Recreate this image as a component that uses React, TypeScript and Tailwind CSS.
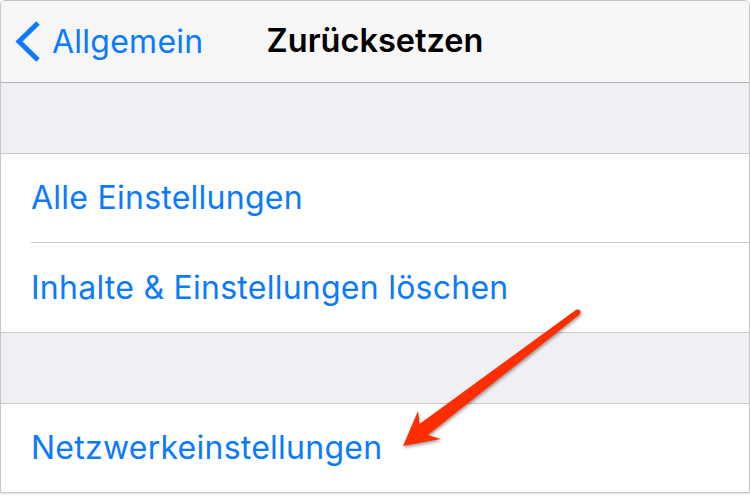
import React from 'react'

const font = { fontFamily: 'Inter, "Liberation Sans", sans-serif' }

function Row({ label, inset }: { label: string; inset?: boolean }) {
  return (
    <div className="relative bg-white h-[88px] flex items-center pl-[30px]">
      <span className="text-[32px] text-[#0a7aff] tracking-[0.25px]">{label}</span>
      {inset && <div className="absolute left-[30px] right-0 bottom-[-1px] h-px bg-[#c8c7cc]" />}
    </div>
  )
}

function Arrow() {
  return (
    <svg className="absolute left-0 top-0 pointer-events-none" width="750" height="496" style={{ filter: 'drop-shadow(1px 2px 1.5px rgba(0,0,0,0.35))' }}>
      <polygon
        points="579.5,314.5 428,435 441,439 403,446 418,411 419.5,424 576.5,309.5"
        fill="#ff2d00"
      />
      <circle cx="578" cy="312" r="2.5" fill="#ff2d00" />
    </svg>
  )
}

export default function App() {
  return (
    <div className="relative w-[750px] h-[496px] bg-white" style={font}>
      <div className="w-[750px] h-[493px] border border-[#c6c6c6] rounded-t-[5px] overflow-hidden shadow-[0_1px_2px_rgba(0,0,0,0.12)] flex flex-col">
        {/* nav bar */}
        <div className="h-[82px] shrink-0 bg-[#f6f6f7] border-b border-[#b2b2b2] flex items-center relative">
          <div className="flex items-center pl-[13px] gap-[10px]">
            <svg width="28" height="44" viewBox="0 0 28 44">
              <path d="M24 3 L5 21.5 L24 40" fill="none" stroke="#0a7aff" strokeWidth="5" strokeLinecap="butt" strokeLinejoin="miter" />
            </svg>
            <span className="text-[32px] text-[#0a7aff] tracking-[0.25px]">Allgemein</span>
          </div>
          <span className="absolute left-0 right-0 text-center text-[32.5px] font-semibold text-black">
            Zurücksetzen
          </span>
        </div>
        <div className="h-[71px] shrink-0 bg-[#efeff4] border-b border-[#c8c7cc]" />
        <Row label="Alle Einstellungen" inset />
        <div className="h-px bg-white" />
        <div className="h-[90px] shrink-0 bg-white border-b border-[#c8c7cc] flex items-center pl-[30px]">
          <span className="text-[32px] text-[#0a7aff] tracking-[0.25px]">Inhalte &amp; Einstellungen löschen</span>
        </div>
        <div className="h-[71px] shrink-0 bg-[#efeff4] border-b border-[#c8c7cc]" />
        <Row label="Netzwerkeinstellungen" />
      </div>
      <Arrow />
    </div>
  )
}
